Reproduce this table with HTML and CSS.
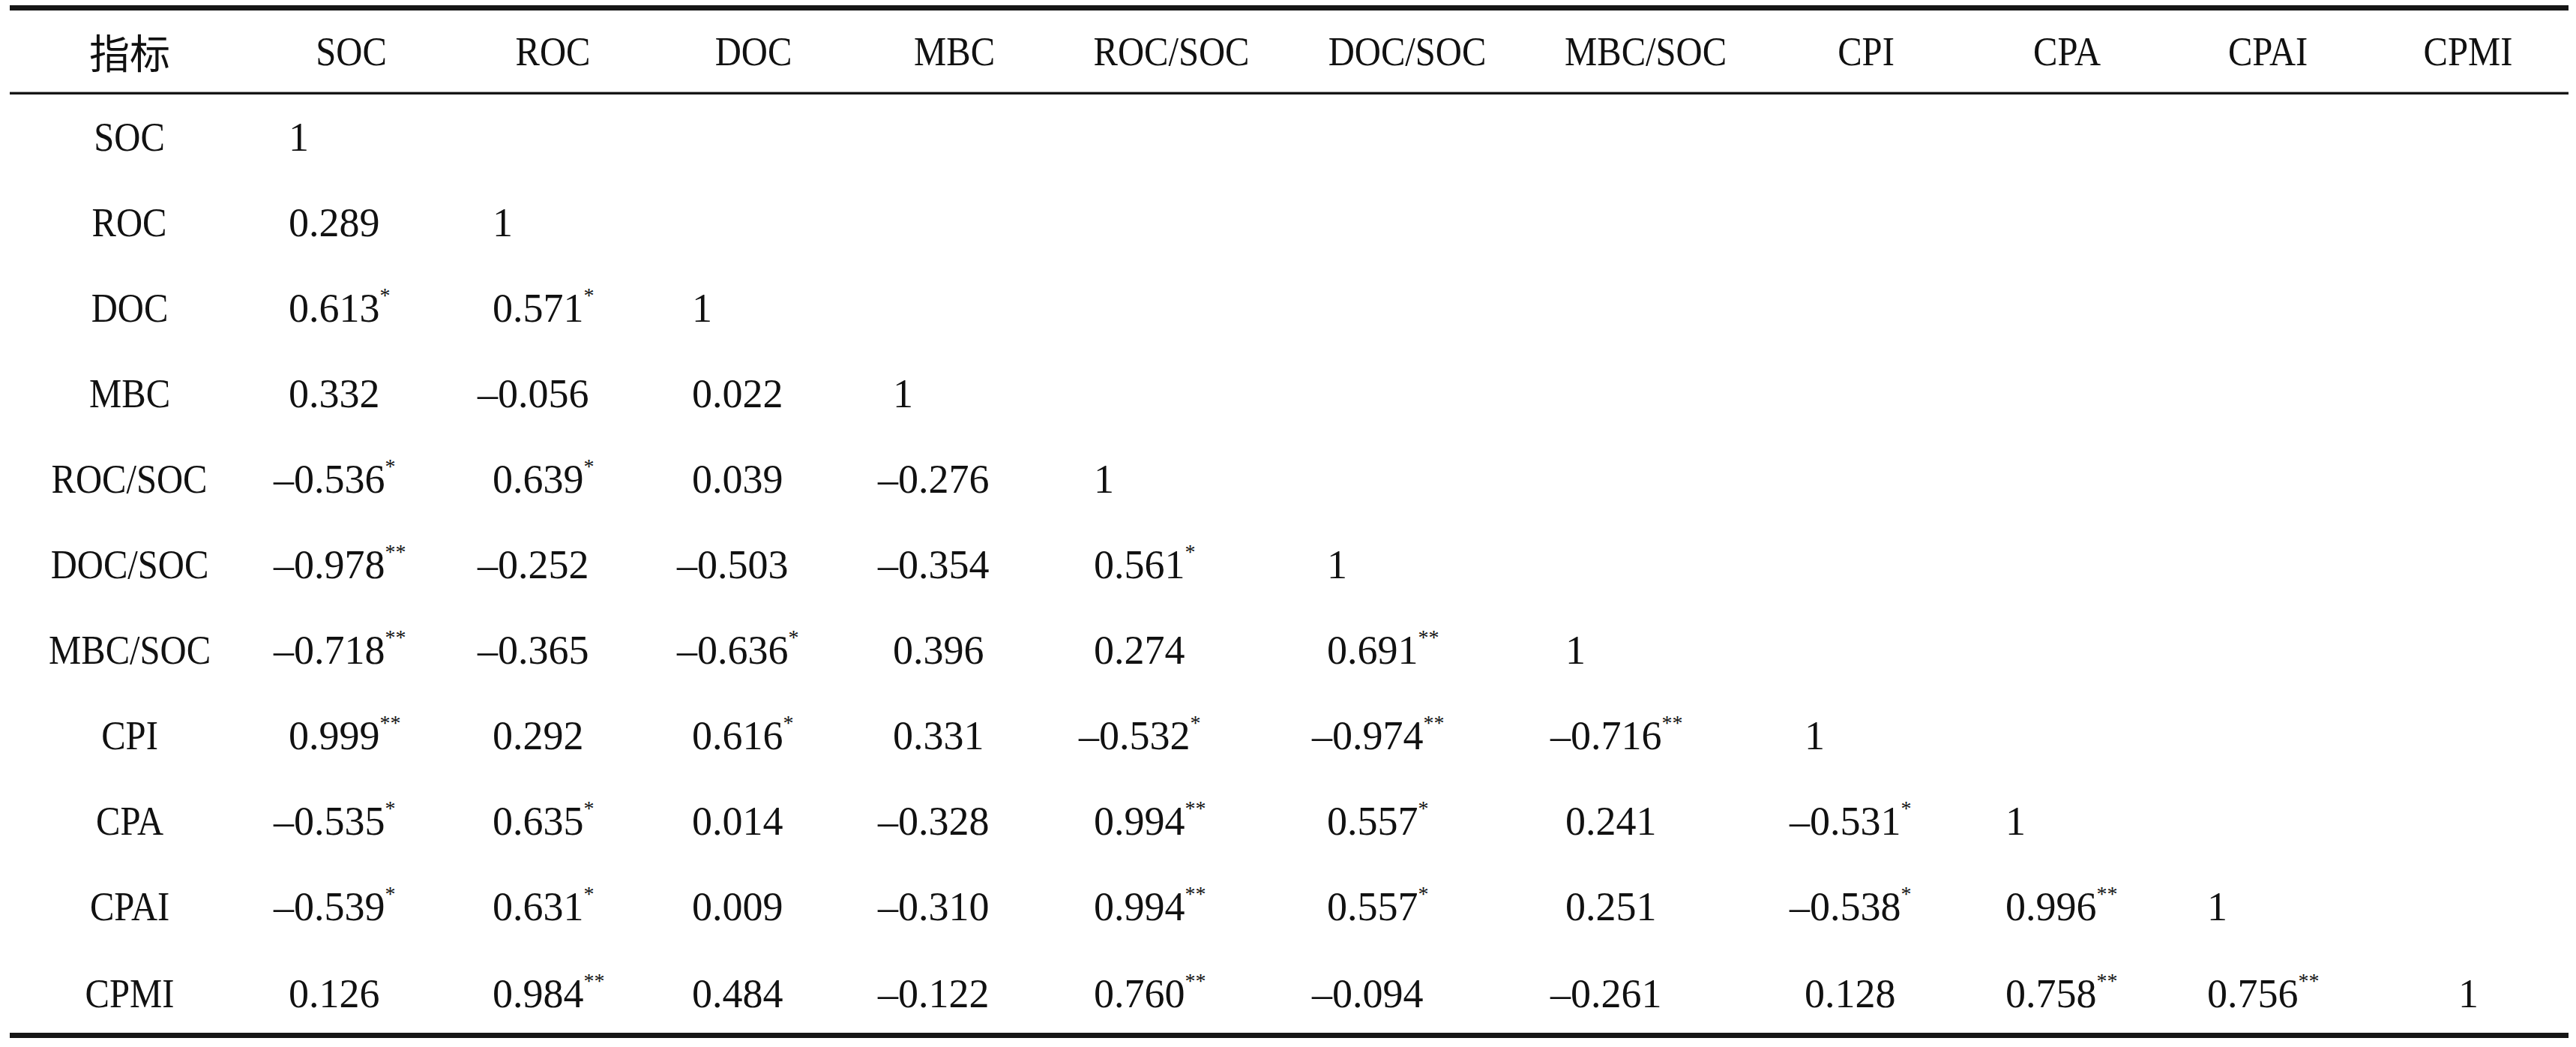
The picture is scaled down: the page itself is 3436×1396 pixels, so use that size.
FILE: index.html
```html
<!DOCTYPE html>
<html lang="zh">
<head>
<meta charset="utf-8">
<title>相关性分析</title>
<link rel="stylesheet" href="styles.css">
</head>
<body>
<div class="tbl">
  <div class="h zh"><span>指标</span></div>
  <div class="h"><span>SOC</span></div>
  <div class="h"><span>ROC</span></div>
  <div class="h"><span>DOC</span></div>
  <div class="h"><span>MBC</span></div>
  <div class="h"><span>ROC/SOC</span></div>
  <div class="h"><span>DOC/SOC</span></div>
  <div class="h"><span>MBC/SOC</span></div>
  <div class="h"><span>CPI</span></div>
  <div class="h"><span>CPA</span></div>
  <div class="h"><span>CPAI</span></div>
  <div class="h"><span>CPMI</span></div>

  <div class="lab"><span>SOC</span></div>
  <div class="c"><span>1</span></div>
  <div class="c"></div><div class="c"></div><div class="c"></div><div class="c"></div><div class="c"></div><div class="c"></div><div class="c"></div><div class="c"></div><div class="c"></div><div class="c"></div>

  <div class="lab"><span>ROC</span></div>
  <div class="c"><span>0.289</span></div>
  <div class="c"><span>1</span></div>
  <div class="c"></div><div class="c"></div><div class="c"></div><div class="c"></div><div class="c"></div><div class="c"></div><div class="c"></div><div class="c"></div><div class="c"></div>

  <div class="lab"><span>DOC</span></div>
  <div class="c"><span>0.613<sup>*</sup></span></div>
  <div class="c"><span>0.571<sup>*</sup></span></div>
  <div class="c"><span>1</span></div>
  <div class="c"></div><div class="c"></div><div class="c"></div><div class="c"></div><div class="c"></div><div class="c"></div><div class="c"></div><div class="c"></div>

  <div class="lab"><span>MBC</span></div>
  <div class="c"><span>0.332</span></div>
  <div class="c"><span class="neg">–0.056</span></div>
  <div class="c"><span>0.022</span></div>
  <div class="c"><span>1</span></div>
  <div class="c"></div><div class="c"></div><div class="c"></div><div class="c"></div><div class="c"></div><div class="c"></div><div class="c"></div>

  <div class="lab"><span>ROC/SOC</span></div>
  <div class="c"><span class="neg">–0.536<sup>*</sup></span></div>
  <div class="c"><span>0.639<sup>*</sup></span></div>
  <div class="c"><span>0.039</span></div>
  <div class="c"><span class="neg">–0.276</span></div>
  <div class="c"><span>1</span></div>
  <div class="c"></div><div class="c"></div><div class="c"></div><div class="c"></div><div class="c"></div><div class="c"></div>

  <div class="lab"><span>DOC/SOC</span></div>
  <div class="c"><span class="neg">–0.978<sup>**</sup></span></div>
  <div class="c"><span class="neg">–0.252</span></div>
  <div class="c"><span class="neg">–0.503</span></div>
  <div class="c"><span class="neg">–0.354</span></div>
  <div class="c"><span>0.561<sup>*</sup></span></div>
  <div class="c"><span>1</span></div>
  <div class="c"></div><div class="c"></div><div class="c"></div><div class="c"></div><div class="c"></div>

  <div class="lab"><span>MBC/SOC</span></div>
  <div class="c"><span class="neg">–0.718<sup>**</sup></span></div>
  <div class="c"><span class="neg">–0.365</span></div>
  <div class="c"><span class="neg">–0.636<sup>*</sup></span></div>
  <div class="c"><span>0.396</span></div>
  <div class="c"><span>0.274</span></div>
  <div class="c"><span>0.691<sup>**</sup></span></div>
  <div class="c"><span>1</span></div>
  <div class="c"></div><div class="c"></div><div class="c"></div><div class="c"></div>

  <div class="lab"><span>CPI</span></div>
  <div class="c"><span>0.999<sup>**</sup></span></div>
  <div class="c"><span>0.292</span></div>
  <div class="c"><span>0.616<sup>*</sup></span></div>
  <div class="c"><span>0.331</span></div>
  <div class="c"><span class="neg">–0.532<sup>*</sup></span></div>
  <div class="c"><span class="neg">–0.974<sup>**</sup></span></div>
  <div class="c"><span class="neg">–0.716<sup>**</sup></span></div>
  <div class="c"><span>1</span></div>
  <div class="c"></div><div class="c"></div><div class="c"></div>

  <div class="lab"><span>CPA</span></div>
  <div class="c"><span class="neg">–0.535<sup>*</sup></span></div>
  <div class="c"><span>0.635<sup>*</sup></span></div>
  <div class="c"><span>0.014</span></div>
  <div class="c"><span class="neg">–0.328</span></div>
  <div class="c"><span>0.994<sup>**</sup></span></div>
  <div class="c"><span>0.557<sup>*</sup></span></div>
  <div class="c"><span>0.241</span></div>
  <div class="c"><span class="neg">–0.531<sup>*</sup></span></div>
  <div class="c"><span>1</span></div>
  <div class="c"></div><div class="c"></div>

  <div class="lab"><span>CPAI</span></div>
  <div class="c"><span class="neg">–0.539<sup>*</sup></span></div>
  <div class="c"><span>0.631<sup>*</sup></span></div>
  <div class="c"><span>0.009</span></div>
  <div class="c"><span class="neg">–0.310</span></div>
  <div class="c"><span>0.994<sup>**</sup></span></div>
  <div class="c"><span>0.557<sup>*</sup></span></div>
  <div class="c"><span>0.251</span></div>
  <div class="c"><span class="neg">–0.538<sup>*</sup></span></div>
  <div class="c"><span>0.996<sup>**</sup></span></div>
  <div class="c"><span>1</span></div>
  <div class="c"></div>

  <div class="lab last"><span>CPMI</span></div>
  <div class="c last"><span>0.126</span></div>
  <div class="c last"><span>0.984<sup>**</sup></span></div>
  <div class="c last"><span>0.484</span></div>
  <div class="c last"><span class="neg">–0.122</span></div>
  <div class="c last"><span>0.760<sup>**</sup></span></div>
  <div class="c last"><span class="neg">–0.094</span></div>
  <div class="c last"><span class="neg">–0.261</span></div>
  <div class="c last"><span>0.128</span></div>
  <div class="c last"><span>0.758<sup>**</sup></span></div>
  <div class="c last"><span>0.756<sup>**</sup></span></div>
  <div class="c last ctr"><span>1</span></div>
</div>
</body>
</html>
```

FILE: styles.css
```css
html, body {
  margin: 0;
  padding: 0;
  background: #ffffff;
}

body {
  font-family: "Liberation Serif", "Times New Roman", "Noto Sans CJK SC", serif;
  font-size: 54px;
  color: #111111;
}

.tbl {
  margin: 7px 0 0 13px;
  width: 3413px;
  display: grid;
  grid-template-columns: 320px 272px 266px 268px 268px 311px 318px 319px 268px 269px 267px 267px;
  grid-template-rows: 112px repeat(10, 114px) 111px;
  border-top: 7px solid #161616;
  border-bottom: 7px solid #161616;
}

.tbl > div {
  display: flex;
  align-items: center;
  line-height: 1;
  white-space: nowrap;
}

.h {
  justify-content: center;
  border-bottom: 3px solid #161616;
  box-shadow: inset 0 -1px 0 #a8a8a8;
}

.h span,
.lab span {
  display: inline-block;
  transform: scaleX(0.9);
}

.zh span {
  font-family: "Noto Sans CJK SC", "Liberation Serif", sans-serif;
  font-weight: 400;
  transform: none;
}

.lab {
  justify-content: center;
}

.c {
  padding-left: 52px;
}

.c.ctr {
  justify-content: center;
  padding-left: 0;
}

.neg {
  margin-left: -20px;
}

.last {
  padding-top: 6px;
}

sup {
  font-size: 28px;
  line-height: 0;
  vertical-align: 26px;
}
```
